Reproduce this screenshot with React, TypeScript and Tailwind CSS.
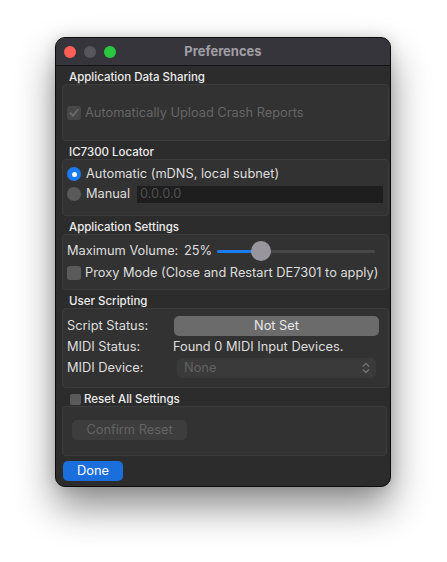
import React from "react";

function CheckMark({ color }: { color: string }) {
  return (
    <svg width="10" height="10" viewBox="0 0 10 10">
      <path d="M1.5 5.2 L4 7.8 L8.6 2" fill="none" stroke={color} strokeWidth="1.8" strokeLinecap="round" strokeLinejoin="round" />
    </svg>
  );
}

function Chevrons() {
  return (
    <svg width="8" height="12" viewBox="0 0 8 12">
      <path d="M1.2 4.3 L4 1.5 L6.8 4.3" fill="none" stroke="#707070" strokeWidth="1.4" strokeLinecap="round" strokeLinejoin="round" />
      <path d="M1.2 7.7 L4 10.5 L6.8 7.7" fill="none" stroke="#707070" strokeWidth="1.4" strokeLinecap="round" strokeLinejoin="round" />
    </svg>
  );
}

function SectionLabel({ children }: { children: React.ReactNode }) {
  return (
    <div className="h-[18px] pt-[4px] pl-[13px] text-[11.5px] leading-[14px] font-medium text-[#ececec]">
      {children}
    </div>
  );
}

export default function App() {
  return (
    <div className="w-[447px] h-[562px] bg-white pt-[37px] pl-[55px] font-['Inter',sans-serif]">
      <div className="w-[336px] h-[450px] rounded-[10px] border border-[#0c0c0c] bg-[#2c2c2c] overflow-hidden shadow-[0_20px_38px_rgba(0,0,0,0.45),0_0_14px_rgba(0,0,0,0.14)] flex flex-col">
        {/* Title bar */}
        <div className="relative h-[28px] bg-[#37353c] border-b border-[#141414] flex items-center shrink-0">
          <div className="flex items-center gap-[8px] pl-[8px]">
            <div className="w-[12px] h-[12px] rounded-full bg-[#fe5f57]" />
            <div className="w-[12px] h-[12px] rounded-full bg-[#57565c]" />
            <div className="w-[12px] h-[12px] rounded-full bg-[#28c840]" />
          </div>
          <div className="absolute inset-0 flex items-center justify-center text-[13px] font-bold text-[#a09fa5] pointer-events-none">
            Preferences
          </div>
        </div>

        {/* Body */}
        <div className="flex flex-col text-[12.8px] leading-[16px] text-[#dedede]">
          <SectionLabel>Application Data Sharing</SectionLabel>
          <div className="ml-[6px] mr-[1px] h-[57px] rounded-[4px] border border-[#3c3c3c] bg-[#323232] flex items-center pl-[4px]">
            <div className="w-[14px] h-[14px] rounded-[3px] bg-[#474747] flex items-center justify-center">
              <CheckMark color="#6c6c6c" />
            </div>
            <span className="ml-[4px] text-[#666666]">Automatically Upload Crash Reports</span>
          </div>

          <SectionLabel>IC7300 Locator</SectionLabel>
          <div className="ml-[6px] mr-[1px] h-[57px] rounded-[4px] border border-[#3c3c3c] bg-[#323232] pt-[4px] pl-[4px] pr-[5px]">
            <div className="h-[20px] flex items-center">
              <div className="w-[14px] h-[14px] rounded-full bg-[#1b7bf2] flex items-center justify-center">
                <div className="w-[5px] h-[5px] rounded-full bg-white" />
              </div>
              <span className="ml-[5px]">Automatic (mDNS, local subnet)</span>
            </div>
            <div className="h-[20px] flex items-center">
              <div className="w-[14px] h-[14px] rounded-full bg-[#5a5a5a]" />
              <span className="ml-[5px]">Manual</span>
              <div className="ml-auto w-[246px] h-[17px] bg-[#1e1e1e] flex items-center pl-[3px] text-[#505050]">
                0.0.0.0
              </div>
            </div>
          </div>

          <SectionLabel>Application Settings</SectionLabel>
          <div className="ml-[6px] mr-[1px] h-[56px] rounded-[4px] border border-[#3c3c3c] bg-[#323232] pt-[5px] pl-[4px]">
            <div className="h-[22px] flex items-center">
              <span className="w-[117px] shrink-0">Maximum Volume:</span>
              <span className="w-[33px] shrink-0">25%</span>
              <div className="relative w-[158px] h-[20px] flex items-center">
                <div className="w-full h-[3px] rounded-full bg-[#474747]" />
                <div className="absolute left-0 top-[8.5px] w-[40px] h-[3px] rounded-full bg-[#1b7bf2]" />
                <div className="absolute left-[34px] top-0 w-[20px] h-[20px] rounded-full bg-[#98969c]" />
              </div>
            </div>
            <div className="h-[22px] flex items-center">
              <div className="w-[14px] h-[14px] rounded-[3px] bg-[#5a5a5a]" />
              <span className="ml-[4px]">Proxy Mode (Close and Restart DE7301 to apply)</span>
            </div>
          </div>

          <SectionLabel>User Scripting</SectionLabel>
          <div className="ml-[6px] mr-[1px] h-[80px] rounded-[4px] border border-[#3c3c3c] bg-[#323232] pt-[6px] pl-[4px]">
            <div className="h-[21px] flex items-center">
              <span className="w-[106px]">Script Status:</span>
              <div className="ml-[1px] w-[205px] h-[20px] rounded-[5px] bg-[#6b6b6b] flex items-center justify-center text-[#e8e8e8]">
                Not Set
              </div>
            </div>
            <div className="h-[21px] flex items-center">
              <span className="w-[106px]">MIDI Status:</span>
              <span>Found 0 MIDI Input Devices.</span>
            </div>
            <div className="h-[21px] flex items-center">
              <span className="w-[106px]">MIDI Device:</span>
              <div className="ml-[4px] w-[199px] h-[20px] rounded-[5px] bg-[#3a3a3a] flex items-center pl-[7px] pr-[6px] text-[#626262]">
                <span>None</span>
                <span className="ml-auto flex items-center"><Chevrons /></span>
              </div>
            </div>
          </div>

          <div className="h-[18px] pt-[4px] pl-[14px] flex items-start">
            <div className="flex items-center h-[14px]">
              <div className="w-[11px] h-[11px] rounded-[2px] bg-[#5a5a5a]" />
              <span className="ml-[3px] text-[11.5px] leading-[14px] font-medium text-[#ececec]">Reset All Settings</span>
            </div>
          </div>
          <div className="ml-[6px] mr-[3px] h-[50px] rounded-[4px] border border-[#3c3c3c] bg-[#323232] pt-[13px] pl-[9px]">
            <div className="w-[115px] h-[20px] rounded-[5px] bg-[#3d3d3d] flex items-center justify-center text-[#646464]">
              Confirm Reset
            </div>
          </div>

          <div className="mt-[5px] ml-[7px] w-[60px] h-[20px] rounded-[5px] bg-[#1b6fdc] flex items-center justify-center text-white">
            Done
          </div>
        </div>
      </div>
    </div>
  );
}
